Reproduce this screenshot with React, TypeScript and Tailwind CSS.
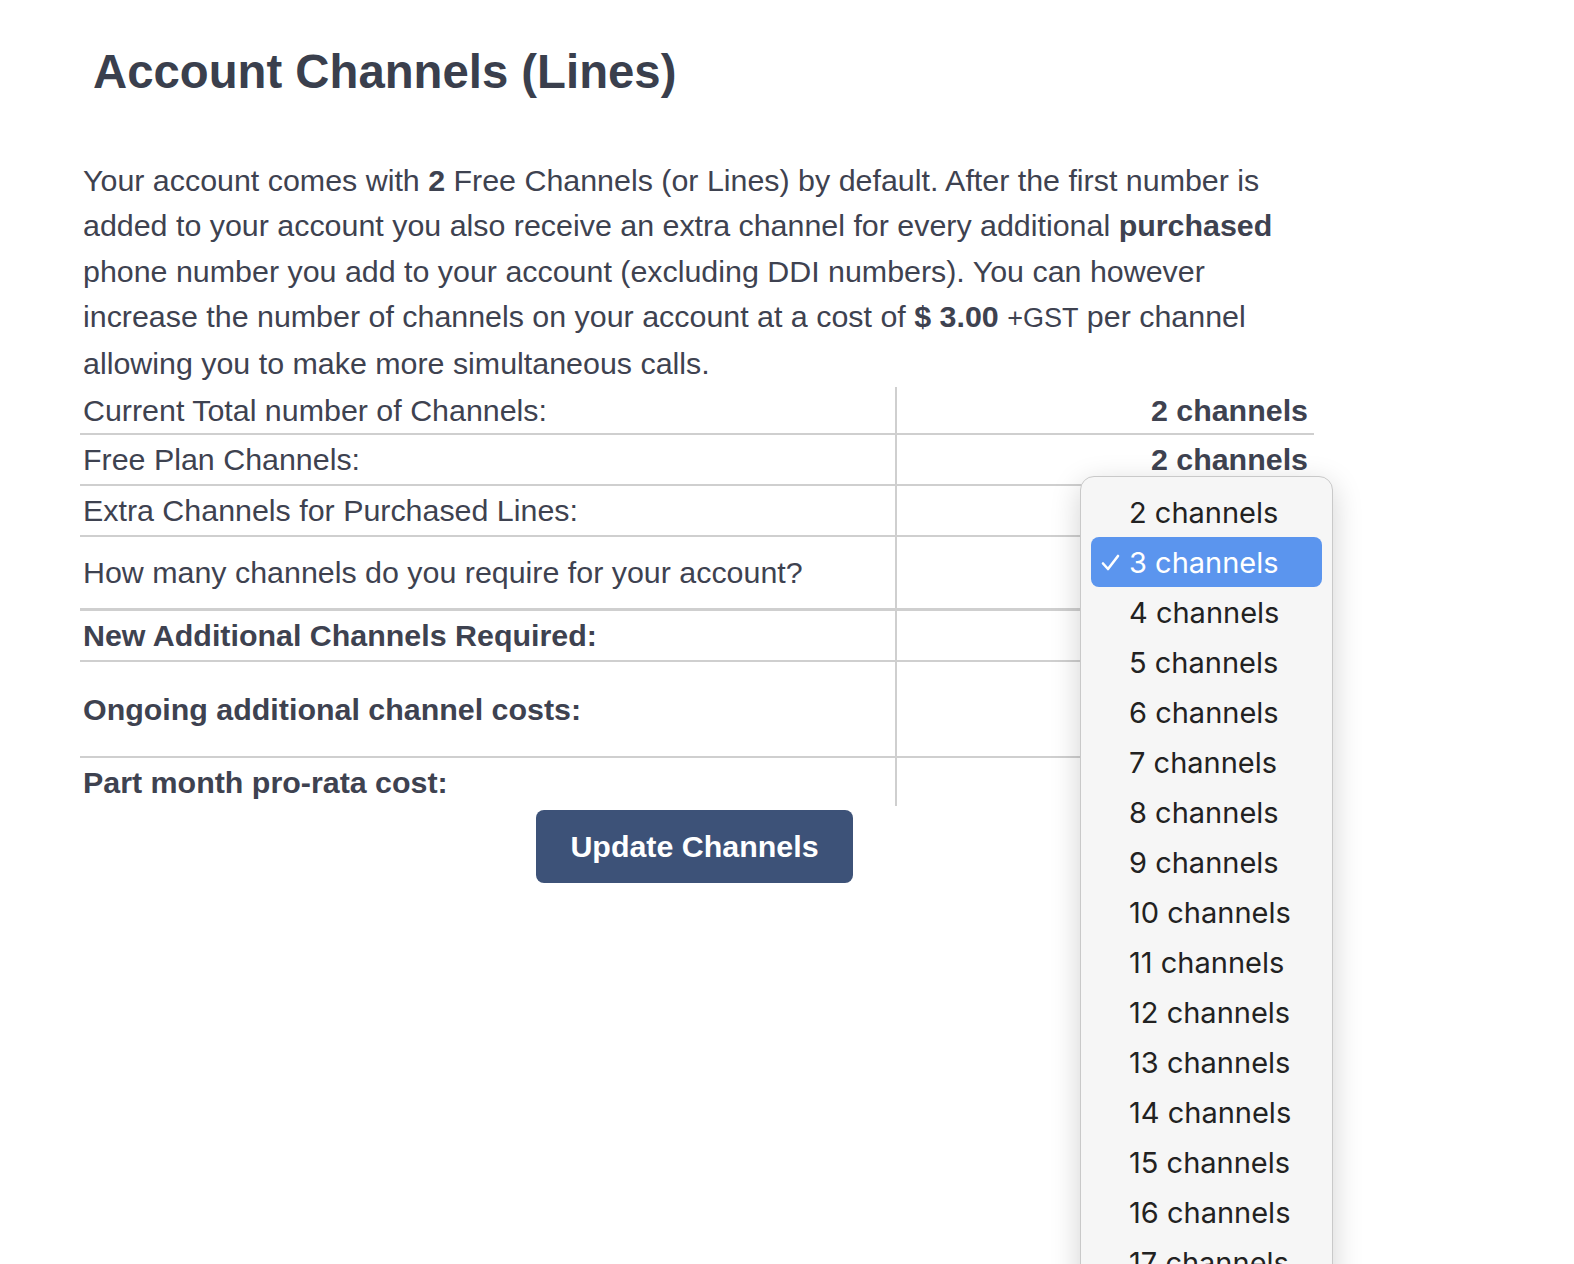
import * as React from "react"

const rows = [
  { label: "Current Total number of Channels:", value: "2 channels", h: "h-[48px]", bold: false, border: "border-b-2" },
  { label: "Free Plan Channels:", value: "2 channels", h: "h-[51px]", bold: false, border: "border-b-2" },
  { label: "Extra Channels for Purchased Lines:", value: "", h: "h-[51px]", bold: false, border: "border-b-2" },
  { label: "How many channels do you require for your account?", value: "", h: "h-[74px]", bold: false, border: "border-b-[3px]" },
  { label: "New Additional Channels Required:", value: "", h: "h-[51px]", bold: true, border: "border-b-2" },
  { label: "Ongoing additional channel costs:", value: "", h: "h-[96px]", bold: true, border: "border-b-2" },
  { label: "Part month pro-rata cost:", value: "", h: "h-[48px]", bold: true, border: "" },
]

const options = Array.from({ length: 18 }, (_, i) => i + 2)

function Check() {
  return (
    <svg width="19" height="17" viewBox="0 0 19 17" fill="none" className="ml-[10px]">
      <path d="M2 9.5 L7 15 L17 2" stroke="white" strokeWidth="2.6" strokeLinecap="round" strokeLinejoin="round" />
    </svg>
  )
}

function ChannelMenu() {
  return (
    <div className="absolute left-[1080px] top-[476px] w-[253px] h-[820px] rounded-[14px] border border-[#c9c9c9] bg-[#f6f6f6] shadow-[0_8px_30px_rgba(0,0,0,0.18)] px-[10px] pt-[10px] font-['Inter','Noto_Sans',sans-serif] text-[29px] text-[#222222]">
      {options.map((n) => (
        <div
          key={n}
          className={`flex items-center h-[50px] rounded-[8px] ${n === 3 ? "bg-[#5b95ee] text-white" : ""}`}
        >
          <span className="w-[38px] flex items-center">{n === 3 ? <Check /> : null}</span>
          <span className="leading-none">{n} channels</span>
        </div>
      ))}
    </div>
  )
}

export default function App() {
  return (
    <div className="relative h-[1264px] overflow-hidden bg-white font-['Liberation_Sans',Arial,sans-serif] text-[#3e4250]">
      <div className="pl-[80px] w-[1314px]">
        <h1 className="pt-[44px] pl-[13px] text-[47.3px] leading-[56px] font-bold text-[#3a3f4d]">
          Account Channels (Lines)
        </h1>

        <p className="mt-[58px] pl-[3px] text-[30.4px] leading-[45.3px]">
          Your account comes with <b>2</b> Free Channels (or Lines) by default. After the first number is
          added to your account you also receive an extra channel for every additional <b>purchased</b>{" "}
          phone number you add to your account (excluding DDI numbers). You can however increase the
          number of channels on your account at a cost of <b>$ 3.00</b>{" "}
          <span className="text-[27px]">+GST</span> per channel allowing you to make more simultaneous
          calls.
        </p>

        <div className="mt-[1px] text-[30.4px]">
          {rows.map((r) => (
            <div key={r.label} className={`grid grid-cols-[817px_1fr] ${r.h} ${r.border} border-[#cfcfcf]`}>
              <div className={`flex items-center pl-[3px] border-r-2 border-[#cfcfcf] ${r.bold ? "font-bold" : ""}`}>
                {r.label}
              </div>
              <div className="flex items-center justify-end pr-[6px] font-bold">{r.value}</div>
            </div>
          ))}
        </div>

        <div className="flex justify-center pr-[5px] mt-[4px]">
          <button className="h-[73px] px-[34px] rounded-[8px] bg-[#3d5278] text-white text-[30.4px] font-bold">
            Update Channels
          </button>
        </div>
      </div>

      <ChannelMenu />
    </div>
  )
}
